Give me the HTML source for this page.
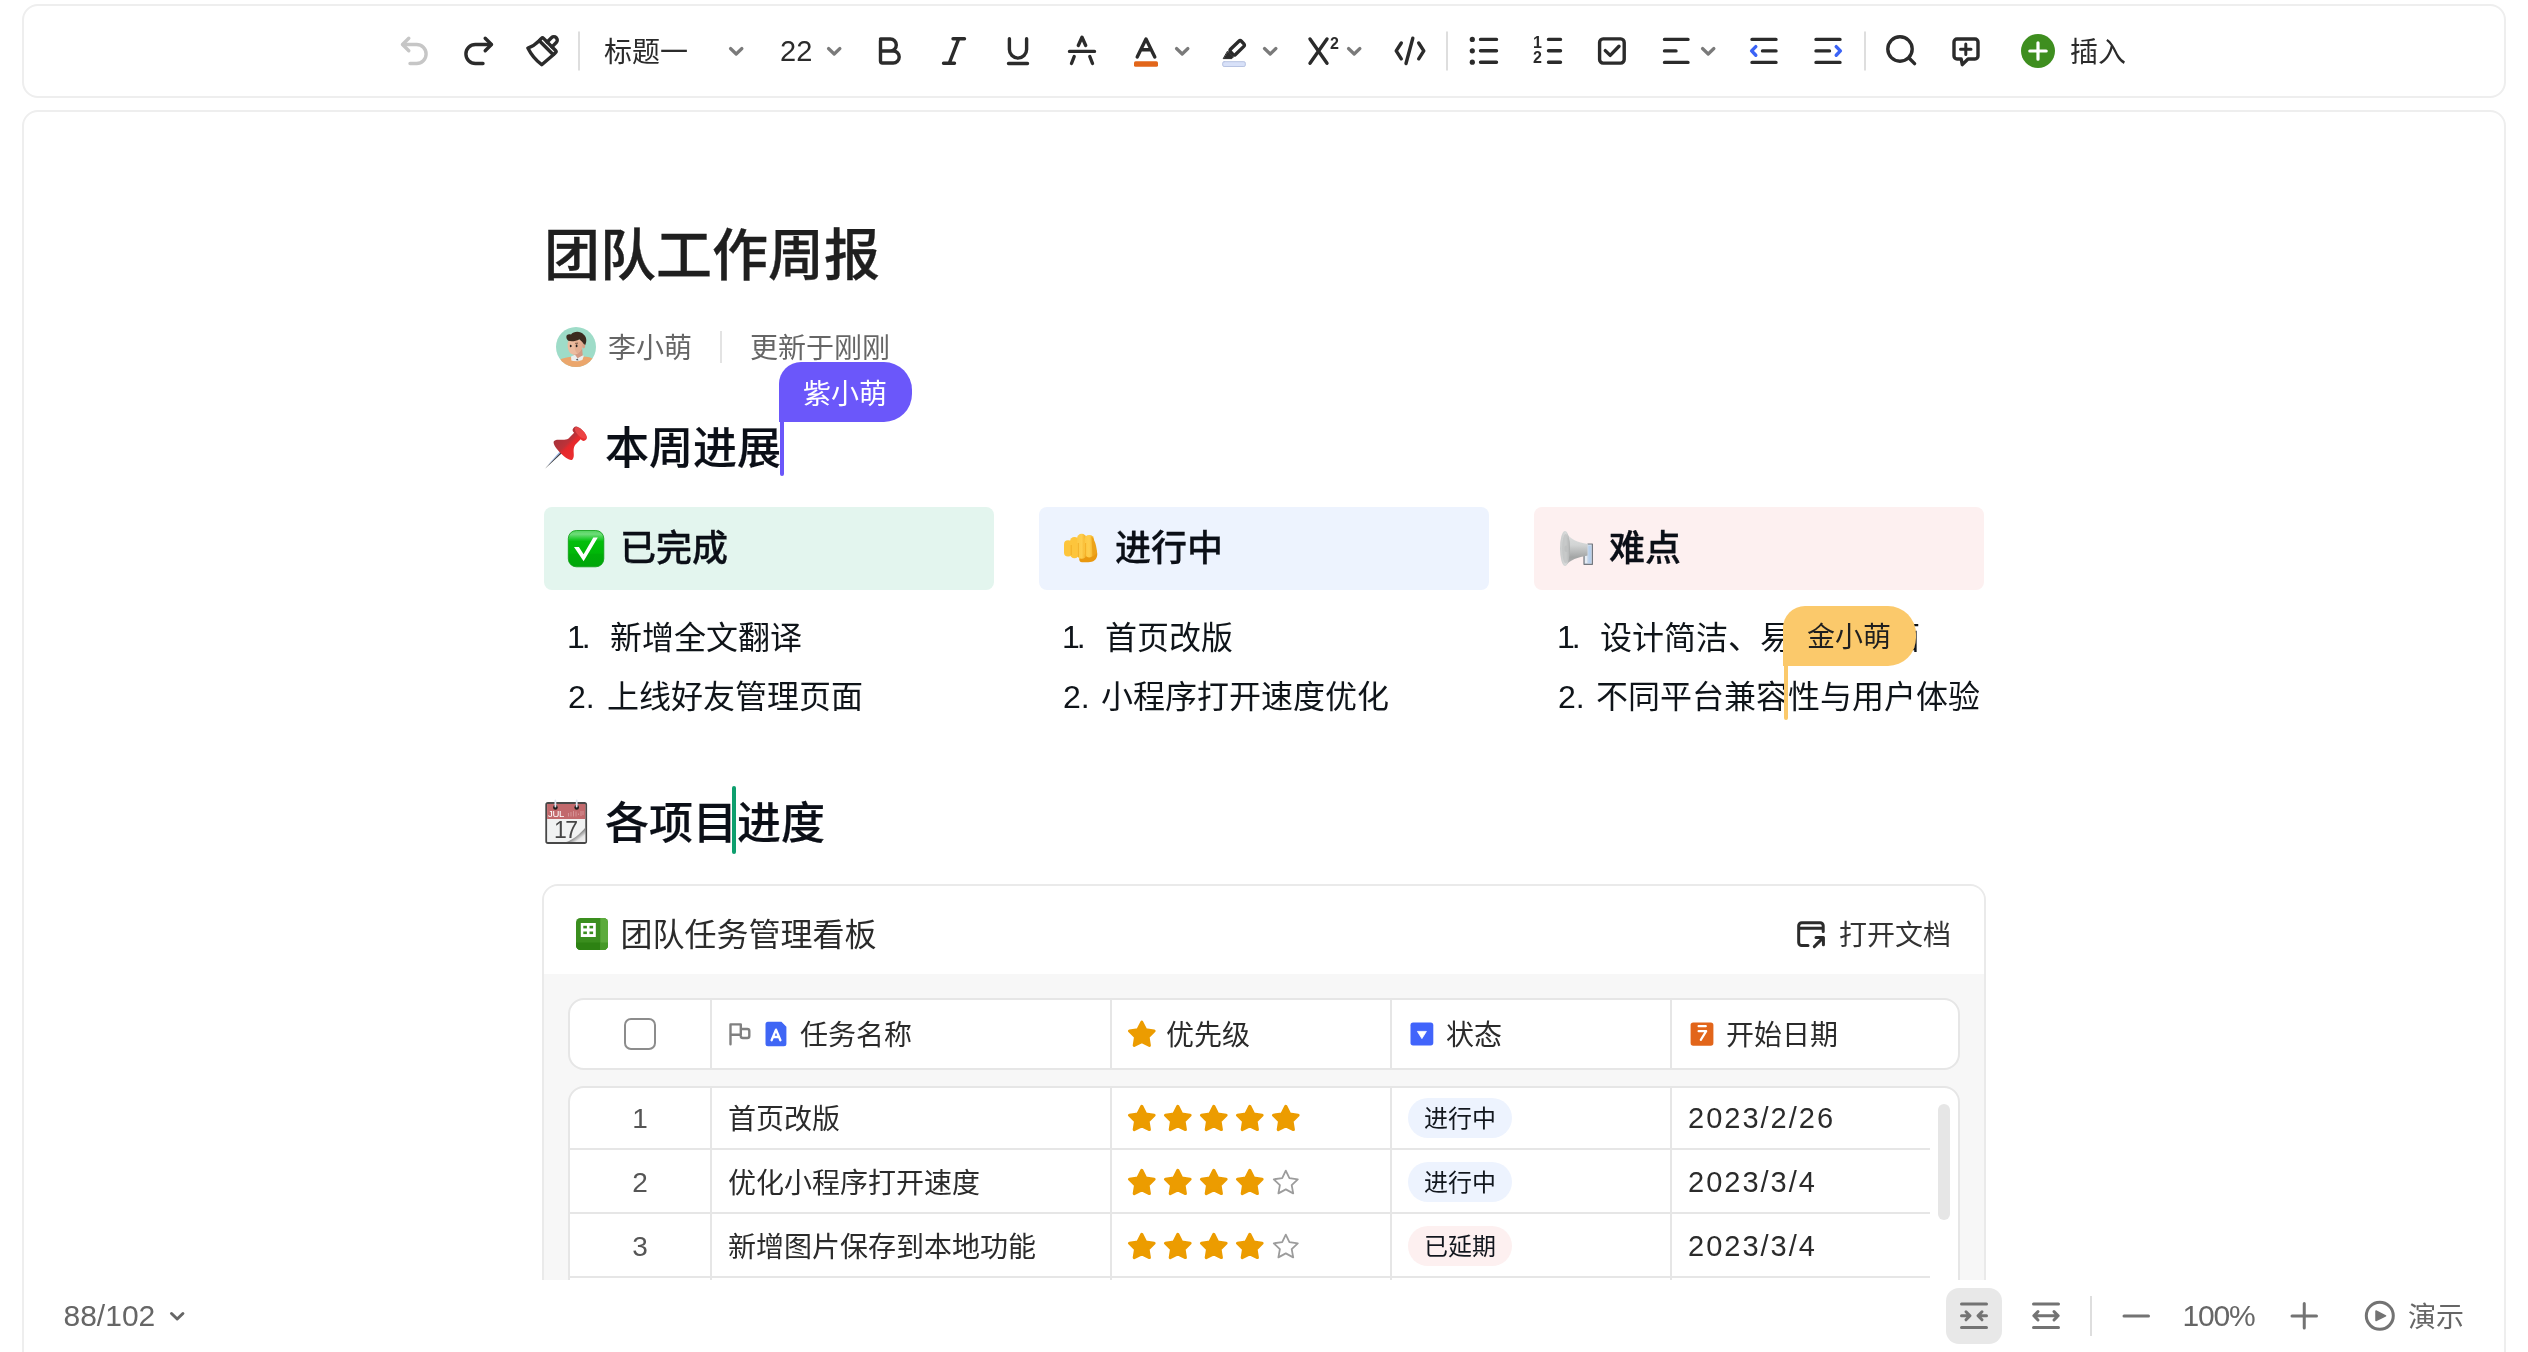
<!DOCTYPE html>
<html lang="zh-CN">
<head>
<meta charset="utf-8">
<title>团队工作周报</title>
<style>
*{box-sizing:border-box;margin:0;padding:0}
html,body{width:2528px;height:1352px;overflow:hidden;background:#fff}
body{position:relative;font-family:"Liberation Sans","Noto Sans CJK SC",sans-serif;color:#2b2b2b;-webkit-font-smoothing:antialiased}
#root{position:absolute;left:0;top:0;width:2528px;height:1352px;will-change:transform}
.abs{position:absolute}
.t{position:absolute;white-space:nowrap}
#toolbar{position:absolute;left:22px;top:4px;width:2484px;height:94px;border:2px solid #eeeeee;border-radius:16px;background:#fff}
#panel{position:absolute;left:22px;top:110px;width:2484px;height:1300px;border:2px solid #eeeeee;border-radius:16px;background:#fff}
#clip{position:absolute;left:0;top:0;width:2528px;height:1280px;overflow:hidden}
svg{position:absolute;left:0;top:0;overflow:visible}
.tb{font-size:28px;line-height:40px;top:33px;color:#2b2b2b}

.ttl{font-size:56px;line-height:80px;font-weight:500;color:#1f1f1f;-webkit-text-stroke:0.35px #1f1f1f}
.nomed .ttl{-webkit-text-stroke-width:1.3px}
.nomed .h2{-webkit-text-stroke-width:1px}
.nomed .h3{-webkit-text-stroke-width:0.85px}
.h2{font-size:44px;line-height:64px;font-weight:500;color:#0b0f17;-webkit-text-stroke:0.22px #0b0f17}
.card{top:507px;width:450px;height:83px;border-radius:8px}
.h3{font-size:36px;line-height:52px;top:523px;font-weight:500;color:#0b0f17;-webkit-text-stroke:0.3px #0b0f17}
.li{font-size:32px;line-height:60px;color:#0f1419}
.vl{top:1000px;width:2px;height:68px;background:#e6e6e6}
.vl2{top:1088px;width:2px;height:300px;background:#e6e6e6}
.hl{left:570px;width:1360px;height:2px;background:#e6e6e6}
.th{font-size:28px;line-height:40px;top:1016px;color:#2b2b2b}
.num{left:620px;width:40px;text-align:center;font-size:28px;line-height:40px;color:#555}
.td{font-size:28px;line-height:40px;color:#2b2b2b}
.pill{left:1408px;width:104px;height:40px;border-radius:20px;text-align:center;font-size:24px;line-height:41.5px;color:#12171e}
.date{left:1688px;font-size:29px;line-height:40px;color:#2b2b2b;letter-spacing:2px}
</style>
</head>
<body>
<div id="root">
<div id="toolbar"></div>
<div id="panel"></div>
<!--TOOLBAR-->
<svg width="2528" height="100" viewBox="0 0 2528 100" fill="none" stroke="#2b2b2b" stroke-width="3.4" stroke-linecap="round" stroke-linejoin="round">
<!-- undo -->
<g stroke="#c6c6c6"><path d="M408.8 38.2 L402.5 44.5 L408.8 50.8"/><path d="M403 44.5 H416.6 a9.5 9.5 0 0 1 0 19 H410"/></g>
<!-- redo -->
<path d="M485.2 38.2 L491.5 44.5 L485.2 50.8"/><path d="M491 44.5 H475.4 a9.5 9.5 0 0 0 0 19 H483"/>
<!-- format brush -->
<g transform="translate(547.8 46.2) rotate(45)"><path d="M-3.4 -2.5 V-8.6 a3.4 3.4 0 0 1 6.8 0 V-2.5"/><rect x="-10" y="-2.5" width="20" height="4.6" rx="1.5"/><path d="M-10 2.1 C-9.8 8.5 -10.8 11.5 -12.8 15.4 Q-2 19 8.8 17.4 L10 2.1"/></g>
<!-- separators -->
<g stroke="#dedede" stroke-width="2" stroke-linecap="butt"><path d="M579 31.5 V70.5"/><path d="M1447 31.5 V70.5"/><path d="M1865 31.5 V70.5"/></g>
<!-- chevrons -->
<g stroke="#7a7a7a" stroke-width="3.2"><path d="M730.5 48.5 l5.7 5.5 l5.7 -5.5"/><path d="M828.5 48.5 l5.7 5.5 l5.7 -5.5"/><path d="M1176.5 48.5 l5.7 5.5 l5.7 -5.5"/><path d="M1264.5 48.5 l5.7 5.5 l5.7 -5.5"/><path d="M1348.5 48.5 l5.7 5.5 l5.7 -5.5"/><path d="M1702.5 48.5 l5.7 5.5 l5.7 -5.5"/></g>
<!-- B -->
<path d="M880.5 39 H890.3 a6 6 0 0 1 0 12 H880.5 M880.5 51 H893.2 a6 6 0 0 1 0 12 H882.5 a2 2 0 0 1 -2 -2 V41 a2 2 0 0 1 2 -2"/>
<!-- I -->
<path d="M953 38.7 H964.5 M943.5 63.3 H954.5 M958.8 38.7 L949.2 63.3"/>
<!-- U -->
<path d="M1009.4 38.7 V49.5 a8.6 8.6 0 0 0 17.2 0 V38.7 M1008.5 63.5 H1027.5"/>
<!-- strike A -->
<path d="M1078.3 45.5 L1082 37.3 L1085.7 45.5 M1069.5 51.4 H1094.5 M1074.2 56.5 L1071.5 63.5 M1089.8 56.5 L1092.5 63.5"/>
<!-- text color A -->
<path d="M1137.2 57 L1146 39 L1154.8 57 M1141.2 49.8 H1150.8"/>
<rect x="1134" y="61.2" width="24" height="5.6" rx="1.6" fill="#e2661a" stroke="none"/>
<!-- highlighter -->
<g transform="translate(1237.2 47.8) rotate(46)"><rect x="-3.6" y="-7.6" width="7.2" height="15.2" rx="1.8"/></g><path d="M1223.6 58.6 L1231.8 58.6 L1233.4 57 L1227.8 51.4 Z" fill="#2b2b2b" stroke-width="1"/>
<rect x="1222.7" y="61.7" width="22.6" height="4.8" rx="1.4" fill="#d8e1f8" stroke="#b7c3e2" stroke-width="1"/>
<!-- X2 -->
<path d="M1310 39 L1327 63.3 M1327 39 L1310 63.3"/>
<!-- code -->
<path d="M1401.3 43 L1396.2 50.9 L1401.3 58.8 M1412.8 38.2 L1406 63.5 M1418.7 43 L1423.8 50.9 L1418.7 58.8"/>
<!-- bullets -->
<g fill="#2b2b2b" stroke="none"><circle cx="1472.3" cy="39.4" r="2.6"/><circle cx="1472.3" cy="50.8" r="2.6"/><circle cx="1472.3" cy="62.2" r="2.6"/></g>
<path d="M1480.5 39.4 H1496.5 M1480.5 50.8 H1496.5 M1480.5 62.2 H1496.5"/>
<!-- numbered -->
<path d="M1548.5 39.4 H1560.5 M1548.5 50.8 H1560.5 M1548.5 62.2 H1560.5"/>
<!-- checkbox -->
<rect x="1599.6" y="38.9" width="24.6" height="24.2" rx="3.5"/><path d="M1605.3 50.6 L1610.2 55.4 L1619 46.3"/>
<!-- align -->
<path d="M1664.5 39.4 H1688 M1664.5 50.9 H1676 M1664.5 62.4 H1688"/>
<!-- outdent -->
<path d="M1752 39.4 H1776 M1762.5 50.9 H1776 M1752 62.4 H1776"/><path d="M1755.8 46.6 L1751.6 50.9 L1755.8 55.2" stroke="#3b63f6"/>
<!-- indent -->
<path d="M1816 39.4 H1840 M1816 50.9 H1829.5 M1816 62.4 H1840"/><path d="M1836.2 46.6 L1840.4 50.9 L1836.2 55.2" stroke="#3b63f6"/>
<!-- search -->
<circle cx="1900" cy="49" r="12.2"/><path d="M1909 58 L1914.6 63.6"/>
<!-- comment -->
<path d="M1957 39 H1975 a3 3 0 0 1 3 3 V56 a3 3 0 0 1 -3 3 H1968 L1962.3 64.6 L1961.2 59 H1957 a3 3 0 0 1 -3 -3 V42 a3 3 0 0 1 3 -3 Z"/><path d="M1960.5 49.2 H1971 M1965.8 44 V54.5" stroke-width="3"/>
<!-- insert -->
<circle cx="2038" cy="51" r="17" fill="#3e8e1f" stroke="none"/><path d="M2029.8 51 H2046.2 M2038 42.8 V59.2" stroke="#fff" stroke-width="3.2"/>
</svg>
<div class="t tb" style="left:604px">标题一</div>
<div class="t tb" style="left:780px;font-size:29px;top:31px">22</div>
<div class="t" style="left:1330px;top:33.5px;font-size:16px;line-height:20px;font-weight:bold;color:#2b2b2b">2</div>
<div class="t" style="left:1533px;top:32.5px;font-size:16px;line-height:20px;font-weight:bold;color:#2b2b2b">1</div>
<div class="t" style="left:1533px;top:47.5px;font-size:16px;line-height:20px;font-weight:bold;color:#2b2b2b">2</div>
<div class="t tb" style="left:2070px;top:33px">插入</div>
<!--/TOOLBAR-->
<div id="clip">
<!--DOC-->
<!-- title -->
<div class="t ttl" style="left:544px;top:216px">团队工作周报</div>
<!-- avatar -->
<svg style="left:556px;top:327px" width="40" height="40" viewBox="0 0 40 40">
<defs><clipPath id="avc"><circle cx="20" cy="20" r="20"/></clipPath></defs>
<g clip-path="url(#avc)"><rect width="40" height="40" fill="#9edcc8"/>
<path d="M2 33.5 C7 30.8 12 29.9 17 29.8 L27 29.4 C31.5 29.6 35.5 30.6 38.5 32.2 L40 40 L0 40 Z" fill="#eba66c"/>
<path d="M18 23.5 L26.2 21.5 L26.8 29.2 L21.5 31.5 L17.6 28.4 Z" fill="#d39a83"/>
<path d="M15 29.6 L19 27.8 L21.6 31.2 L26.6 28.4 L27.9 28.8 L26.4 33 L22 34.2 L17.2 34 L15.3 33.4 Z" fill="#eceeee"/>
<path d="M19.8 33 L21.4 31.6 L22.6 33.4 Z" fill="#4c4f57"/>
<path d="M11.9 15 C11 20 12.4 24 14.4 26.3 C16.4 28.1 19.6 28 22 26.5 C25.6 24 27.1 20 27 15 C25 11 14 11 11.9 15 Z" fill="#ecbc9f"/>
<path d="M19 14 C18 20 19 26 22 26.5 C25.6 24 27.1 20 27 15 Z" fill="#dfa88c" opacity="0.7"/>
<ellipse cx="27.7" cy="18.8" rx="1.5" ry="2.6" fill="#d9a288"/>
<path d="M10.4 10.6 C9.9 7.4 12.5 6.7 15 7.4 C17.5 4.1 24.6 3.9 27.6 7.4 C30.9 10 30.9 14.6 29.2 17.9 L27.3 16.6 C26.5 14.5 24.5 13.8 23.4 12.2 C20 14.4 15 14.6 12.2 13.7 C11.2 13 10.6 12 10.4 10.6 Z" fill="#3b2b1f"/>
<ellipse cx="14.7" cy="19" rx="0.9" ry="1.3" fill="#22201f"/><ellipse cx="20.6" cy="18.9" rx="0.9" ry="1.3" fill="#22201f"/>
<path d="M19.2 16.4 L22 16.2" stroke="#4a3728" stroke-width="0.7"/>
</g></svg>
<div class="t" style="left:608px;top:329px;font-size:28px;line-height:40px;color:#666">李小萌</div>
<div class="abs" style="left:720px;top:331px;width:2px;height:32px;background:#e3e3e3"></div>
<div class="t" style="left:750px;top:329px;font-size:28px;line-height:40px;color:#666">更新于刚刚</div>
<!-- purple cursor -->
<div class="abs" style="left:779px;top:362px;width:133px;height:60px;background:#6b57fa;border-radius:22px 28px 28px 0"></div>
<div class="t" style="left:803px;top:374.5px;font-size:28px;line-height:40px;color:#fff">紫小萌</div>
<div class="abs" style="left:780px;top:415px;width:4px;height:61px;background:#6b57fa;border-radius:0 0 2px 2px"></div>
<!-- h2 1 -->
<div class="t h2" style="left:605px;top:417px">本周进展</div>
<!-- cards -->
<div class="abs card" style="left:544px;background:#e3f5ee"></div>
<div class="abs card" style="left:1039px;background:#edf3fe"></div>
<div class="abs card" style="left:1534px;background:#fdf0f0"></div>
<div class="t h3" style="left:620px">已完成</div>
<div class="t h3" style="left:1115px">进行中</div>
<div class="t h3" style="left:1609px">难点</div>
<!-- lists -->
<div class="t li" style="left:567px;top:607px;letter-spacing:-3px">1.</div><div class="t li" style="left:610px;top:607.5px">新增全文翻译</div>
<div class="t li" style="left:568px;top:666.5px">2.</div><div class="t li" style="left:607px;top:666.5px">上线好友管理页面</div>
<div class="t li" style="left:1062px;top:607px;letter-spacing:-3px">1.</div><div class="t li" style="left:1105px;top:607.5px">首页改版</div>
<div class="t li" style="left:1063px;top:666.5px">2.</div><div class="t li" style="left:1101px;top:666.5px">小程序打开速度优化</div>
<div class="t li" style="left:1557px;top:607px;letter-spacing:-3px">1.</div><div class="t li" style="left:1600px;top:607.5px">设计简洁、易用的界面</div>
<div class="t li" style="left:1558px;top:666.5px">2.</div><div class="t li" style="left:1596px;top:666.5px">不同平台兼容性与用户体验</div>
<!-- gold cursor -->
<div class="abs" style="left:1783px;top:606px;width:133px;height:60px;background:#fbc96b;border-radius:22px 28px 28px 0"></div>
<div class="t" style="left:1807px;top:618px;font-size:28px;line-height:40px;color:#1f1f1f">金小萌</div>
<div class="abs" style="left:1784px;top:660px;width:4px;height:60px;background:#fbc96b;border-radius:0 0 2px 2px"></div>
<!-- h2 2 -->
<div class="t h2" style="left:605px;top:792px">各项目进度</div>
<div class="abs" style="left:732px;top:786px;width:4px;height:68px;background:#0e9f6e;border-radius:2px"></div>
<!-- embed card -->
<div class="abs" style="left:542px;top:884px;width:1444px;height:500px;border:2px solid #eaeaea;border-radius:16px;background:#f7f7f7;overflow:hidden">
  <div class="abs" style="left:0;top:0;width:1440px;height:88px;background:#fff"></div>
</div>
<div class="t" style="left:620.5px;top:911px;font-size:32px;line-height:48px;color:#2b2b2b">团队任务管理看板</div>
<div class="t" style="left:1839px;top:915.5px;font-size:28px;line-height:40px;color:#333">打开文档</div>
<!-- header row -->
<div class="abs" style="left:568px;top:998px;width:1392px;height:72px;border:2px solid #e6e6e6;border-radius:16px;background:#fff"></div>
<div class="abs" style="left:568px;top:1086px;width:1392px;height:300px;border:2px solid #e6e6e6;border-radius:16px;background:#fff"></div>
<div class="abs vl" style="left:710px"></div><div class="abs vl" style="left:1110px"></div><div class="abs vl" style="left:1390px"></div><div class="abs vl" style="left:1670px"></div>
<div class="abs vl2" style="left:710px"></div><div class="abs vl2" style="left:1110px"></div><div class="abs vl2" style="left:1390px"></div><div class="abs vl2" style="left:1670px"></div>
<div class="abs hl" style="top:1148px"></div><div class="abs hl" style="top:1212px"></div><div class="abs hl" style="top:1276px"></div>
<div class="abs" style="left:1938px;top:1104px;width:12px;height:116px;border-radius:6px;background:#e6e6e6"></div>
<div class="abs" style="left:624px;top:1018px;width:32px;height:32px;border:2px solid #8c8c8c;border-radius:7px;background:#fff"></div>
<div class="t th" style="left:800px">任务名称</div>
<div class="t th" style="left:1166px">优先级</div>
<div class="t th" style="left:1446px">状态</div>
<div class="t th" style="left:1726px">开始日期</div>
<div class="t num" style="top:1098.5px">1</div><div class="t num" style="top:1162.5px">2</div><div class="t num" style="top:1226.5px">3</div>
<div class="t td" style="left:728px;top:1100px">首页改版</div>
<div class="t td" style="left:728px;top:1164px">优化小程序打开速度</div>
<div class="t td" style="left:728px;top:1228px">新增图片保存到本地功能</div>
<div class="abs pill" style="top:1098px;background:#edf3fe">进行中</div>
<div class="abs pill" style="top:1162px;background:#edf3fe">进行中</div>
<div class="abs pill" style="top:1226px;background:#fdf0f0">已延期</div>
<div class="t date" style="top:1098px">2023/2/26</div>
<div class="t date" style="top:1162px">2023/3/4</div>
<div class="t date" style="top:1226px">2023/3/4</div>
<svg width="2528" height="1352" viewBox="0 0 2528 1352" fill="none">
<defs><linearGradient id="gpin" x1="-13" y1="0" x2="13" y2="0" gradientUnits="userSpaceOnUse"><stop offset="0" stop-color="#a8323a"/><stop offset="0.42" stop-color="#bd3238"/><stop offset="0.55" stop-color="#e6282b"/><stop offset="1" stop-color="#ea2f30"/></linearGradient><linearGradient id="gchk" x1="0" y1="0" x2="0" y2="1"><stop offset="0" stop-color="#4fd35a"/><stop offset="0.1" stop-color="#6fdc7a"/><stop offset="0.24" stop-color="#1fca2c"/><stop offset="0.3" stop-color="#04be0c"/><stop offset="0.62" stop-color="#00b708"/><stop offset="0.66" stop-color="#00ad08"/><stop offset="1" stop-color="#00a60a"/></linearGradient><linearGradient id="ghorn" x1="0" y1="0" x2="0" y2="1"><stop offset="0" stop-color="#dfe1e1"/><stop offset="0.4" stop-color="#d2d4d4"/><stop offset="0.75" stop-color="#a3a5a5"/><stop offset="1" stop-color="#b4b6b6"/></linearGradient><linearGradient id="gmouth" x1="0" y1="0" x2="1" y2="0"><stop offset="0" stop-color="#c9cbcb"/><stop offset="0.6" stop-color="#d9dbdb"/><stop offset="1" stop-color="#a9abab"/></linearGradient><linearGradient id="gcurl" x1="0" y1="0" x2="1" y2="1"><stop offset="0" stop-color="#ffffff"/><stop offset="0.35" stop-color="#f4f4f4"/><stop offset="0.55" stop-color="#8a8a8a"/><stop offset="0.75" stop-color="#e8e8e8"/><stop offset="1" stop-color="#f2f2f2"/></linearGradient><linearGradient id="gfist" x1="0" y1="0" x2="1" y2="0"><stop offset="0" stop-color="#fdc843"/><stop offset="0.5" stop-color="#fece4e"/><stop offset="1" stop-color="#f3ad22"/></linearGradient></defs>
<g transform="translate(564 449.5) rotate(45)"><path d="M-1 2 L0.2 27.5 L1.2 2 Z" fill="#3c3c3c"/><path d="M-1.6 4 L-0.4 24 L-0.2 4 Z" fill="#9db8e8"/><path d="M-13 1 C-13 -3.5 -6 -5 -4.6 -11 L-4.6 -19 C-8 -19 -8.6 -20.5 -8.6 -23 C-8.6 -28 8.6 -28 8.6 -23 C8.6 -20.5 8 -19 4.6 -19 L4.6 -11 C6 -5 13 -3.5 13 1 C13 6.3 -13 6.3 -13 1 Z" fill="url(#gpin)"/><ellipse cx="0" cy="-23.4" rx="7.6" ry="3.2" fill="#ee4a4a" opacity="0.8"/></g>
<rect x="568.3" y="530.5" width="35.5" height="36.3" rx="8" fill="url(#gchk)" stroke="#0a9a10" stroke-width="0.8"/><path d="M574 547 L578.9 547 L583.6 554.2 L593.3 537.4 L597.8 537.4 L583.6 561.2 Z" fill="#fff"/>
<g><path d="M1079.5 546 C1090 543 1097.5 548 1097.3 554 C1097.2 560 1093 562.3 1088 562.2 L1082 562.2 C1078.5 562.2 1078.5 557 1081 556.5 Z" fill="#e9980f"/><rect x="1064" y="540.2" width="8.2" height="16.2" rx="4" fill="#fdc53c"/><rect x="1070" y="536.9" width="9" height="21.4" rx="4.4" fill="#fdc53c"/><rect x="1077" y="533.8" width="9.4" height="25" rx="4.6" fill="url(#gfist)"/><rect x="1084.4" y="535" width="9.6" height="22.4" rx="4.6" fill="url(#gfist)"/><path d="M1071.2 545 V555 M1078.3 543 V557 M1085.6 543 V557" stroke="#f0a920" stroke-width="1" opacity="0.8"/><path d="M1091.5 536.5 C1095 540 1096.6 546 1097 553 L1092.5 557 Z" fill="#eca21a"/></g>
<g><path d="M1584 553 V564.3 H1592.4 V544 H1587.5" fill="#cfdcec" stroke="#74787e" stroke-width="1.2" stroke-linejoin="round"/><rect x="1588.4" y="546" width="2.6" height="17" fill="#b7d0ec"/><rect x="1585" y="556" width="2" height="7" fill="#e6ecf2"/><path d="M1565 531 C1570 540 1578 542 1587.5 544 L1587.5 555.5 C1578 557 1570 560 1565 566 Z" fill="url(#ghorn)"/><ellipse cx="1565" cy="548.5" rx="5" ry="17.6" fill="url(#gmouth)"/><ellipse cx="1565.6" cy="548.6" rx="3.4" ry="14.6" fill="#b9bbbb" opacity="0.55"/><ellipse cx="1566.2" cy="548.8" rx="1.8" ry="3.2" fill="#bfc1c1"/></g>
<g><rect x="546.2" y="803" width="40" height="40" rx="1.8" fill="#f1f2f2" stroke="#484848" stroke-width="1.8"/><path d="M547.1 803.9 H585.3 V819 H547.1 Z" fill="#c2696c"/><path d="M566 842.1 C573 840 580 834 585.3 827.5 L585.3 842.1 Z" fill="url(#gcurl)"/><circle cx="555.4" cy="807.4" r="2.3" fill="#1c1c1c"/><circle cx="576.7" cy="807.4" r="2.3" fill="#1c1c1c"/><path d="M555.4 800.5 V806.5 M576.7 800.5 V806.5" stroke="#dfe6f2" stroke-width="1.8" stroke-linecap="round"/><path d="M568.5 813 V816.5 M571 812 V816.5 M573.5 811 V816.5 M576 811.5 V816.5 M578.5 813.5 V815 M581 811 V816 M583 811 V815" stroke="#d9a0a2" stroke-width="0.8"/></g>
<g><rect x="576" y="918" width="32" height="32" rx="4.5" fill="#3a8e1e"/><path d="M600.3 918 H603.5 a4.5 4.5 0 0 1 4.5 4.5 V945.5 a4.5 4.5 0 0 1 -4.5 4.5 H600.3 Z" fill="#5cab3c"/><path d="M576 942.6 H600.3 V950 H580.5 a4.5 4.5 0 0 1 -4.5 -4.5 Z" fill="#2d8213"/><path d="M600.3 942.6 H608 V945.5 a4.5 4.5 0 0 1 -4.5 4.5 H600.3 Z" fill="#469a28"/><rect x="580.8" y="923" width="15" height="14" fill="#fff"/><g fill="#3a8e1e"><rect x="583.3" y="925.8" width="3.6" height="2.6"/><rect x="589.5" y="925.8" width="3.6" height="2.6"/><rect x="583.3" y="931.5" width="3.6" height="2.6"/><rect x="589.5" y="931.5" width="3.6" height="2.6"/></g></g>
<g stroke="#2b2b2b" stroke-width="3" stroke-linecap="round" stroke-linejoin="round"><path d="M1808 945.5 H1801.7 a3 3 0 0 1 -3 -3 V925.8 a3 3 0 0 1 3 -3 H1820.2 a3 3 0 0 1 3 3 V931.5 M1798.7 928.2 H1823.2"/><path d="M1814.3 946.6 L1823 937.9 M1816 937.4 H1823.4 V944.8"/></g>
<path d="M730.5 1044.2 V1024.4 H740.8 V1034.8 H731 M740.8 1029 H747.3 a2 2 0 0 1 2 2 V1036 a2 2 0 0 1 -2 2 H742.8 a2 2 0 0 1 -2 -2" stroke="#808080" stroke-width="2.4" stroke-linecap="round" stroke-linejoin="round"/>
<path d="M768 1021.8 H781.4 L786.4 1026.8 V1043.8 a2.5 2.5 0 0 1 -2.5 2.5 H768 a2.5 2.5 0 0 1 -2.5 -2.5 V1024.3 a2.5 2.5 0 0 1 2.5 -2.5 Z" fill="#3f66f5"/>
<path d="M771.6 1040.2 L776 1029.6 L780.4 1040.2 M773.3 1037 H778.7" stroke="#fff" stroke-width="2.3" stroke-linecap="round" stroke-linejoin="round"/>
<rect x="1410.5" y="1022.6" width="22.8" height="22.8" rx="2.6" fill="#4164fb"/><path d="M1417.4 1031.4 H1426.4 L1421.9 1038.6 Z" fill="#fff" stroke="#fff" stroke-width="0.8" stroke-linejoin="round"/>
<rect x="1690.6" y="1022.5" width="22.8" height="23.2" rx="2.6" fill="#e2651a"/><path d="M1698.6 1026.2 H1705.8 M1698.6 1031.2 H1706.2 L1700.8 1039.8" stroke="#fff" stroke-width="2.2" stroke-linecap="round" stroke-linejoin="round"/>
<path d="M1141.8 1022.1 L1145.7 1029.7 L1154.1 1031.0 L1148.1 1037.0 L1149.4 1045.4 L1141.8 1041.6 L1134.2 1045.4 L1135.5 1037.0 L1129.5 1031.0 L1137.9 1029.7 Z M1141.8 1106.3 L1145.7 1113.9 L1154.1 1115.2 L1148.1 1121.2 L1149.4 1129.6 L1141.8 1125.8 L1134.2 1129.6 L1135.5 1121.2 L1129.5 1115.2 L1137.9 1113.9 Z M1177.8 1106.3 L1181.7 1113.9 L1190.1 1115.2 L1184.1 1121.2 L1185.4 1129.6 L1177.8 1125.8 L1170.2 1129.6 L1171.5 1121.2 L1165.5 1115.2 L1173.9 1113.9 Z M1213.8 1106.3 L1217.7 1113.9 L1226.1 1115.2 L1220.1 1121.2 L1221.4 1129.6 L1213.8 1125.8 L1206.2 1129.6 L1207.5 1121.2 L1201.5 1115.2 L1209.9 1113.9 Z M1249.8 1106.3 L1253.7 1113.9 L1262.1 1115.2 L1256.1 1121.2 L1257.4 1129.6 L1249.8 1125.8 L1242.2 1129.6 L1243.5 1121.2 L1237.5 1115.2 L1245.9 1113.9 Z M1285.8 1106.3 L1289.7 1113.9 L1298.1 1115.2 L1292.1 1121.2 L1293.4 1129.6 L1285.8 1125.8 L1278.2 1129.6 L1279.5 1121.2 L1273.5 1115.2 L1281.9 1113.9 Z M1141.8 1170.3 L1145.7 1177.9 L1154.1 1179.2 L1148.1 1185.2 L1149.4 1193.6 L1141.8 1189.8 L1134.2 1193.6 L1135.5 1185.2 L1129.5 1179.2 L1137.9 1177.9 Z M1177.8 1170.3 L1181.7 1177.9 L1190.1 1179.2 L1184.1 1185.2 L1185.4 1193.6 L1177.8 1189.8 L1170.2 1193.6 L1171.5 1185.2 L1165.5 1179.2 L1173.9 1177.9 Z M1213.8 1170.3 L1217.7 1177.9 L1226.1 1179.2 L1220.1 1185.2 L1221.4 1193.6 L1213.8 1189.8 L1206.2 1193.6 L1207.5 1185.2 L1201.5 1179.2 L1209.9 1177.9 Z M1249.8 1170.3 L1253.7 1177.9 L1262.1 1179.2 L1256.1 1185.2 L1257.4 1193.6 L1249.8 1189.8 L1242.2 1193.6 L1243.5 1185.2 L1237.5 1179.2 L1245.9 1177.9 Z M1141.8 1234.3 L1145.7 1241.9 L1154.1 1243.2 L1148.1 1249.2 L1149.4 1257.6 L1141.8 1253.8 L1134.2 1257.6 L1135.5 1249.2 L1129.5 1243.2 L1137.9 1241.9 Z M1177.8 1234.3 L1181.7 1241.9 L1190.1 1243.2 L1184.1 1249.2 L1185.4 1257.6 L1177.8 1253.8 L1170.2 1257.6 L1171.5 1249.2 L1165.5 1243.2 L1173.9 1241.9 Z M1213.8 1234.3 L1217.7 1241.9 L1226.1 1243.2 L1220.1 1249.2 L1221.4 1257.6 L1213.8 1253.8 L1206.2 1257.6 L1207.5 1249.2 L1201.5 1243.2 L1209.9 1241.9 Z M1249.8 1234.3 L1253.7 1241.9 L1262.1 1243.2 L1256.1 1249.2 L1257.4 1257.6 L1249.8 1253.8 L1242.2 1257.6 L1243.5 1249.2 L1237.5 1243.2 L1245.9 1241.9 Z" fill="#ec9c00" stroke="#ec9c00" stroke-width="3" stroke-linejoin="round"/>
<path d="M1285.8 1170.6 L1289.4 1178.2 L1297.8 1179.3 L1291.7 1185.1 L1293.2 1193.4 L1285.8 1189.4 L1278.4 1193.4 L1279.9 1185.1 L1273.8 1179.3 L1282.2 1178.2 Z M1285.8 1234.6 L1289.4 1242.2 L1297.8 1243.3 L1291.7 1249.1 L1293.2 1257.4 L1285.8 1253.4 L1278.4 1257.4 L1279.9 1249.1 L1273.8 1243.3 L1282.2 1242.2 Z" fill="none" stroke="#9c9c9c" stroke-width="1.8" stroke-linejoin="round"/>
</svg>
<div class="t" style="left:548px;top:807.5px;font-size:9.5px;line-height:12px;color:#fff;letter-spacing:-0.3px">JUL</div>
<div class="t" style="left:554px;top:817px;font-size:23px;line-height:26px;color:#454545;letter-spacing:-1.5px">17</div>
<!--/DOC-->
</div>
<!--BOTTOM-->
<div class="t" style="left:63.5px;top:1296px;font-size:30px;line-height:40px;color:#666">88/102</div>
<div class="abs" style="left:1946px;top:1288px;width:56px;height:56px;border-radius:13px;background:#e8e8e8"></div>
<div class="abs" style="left:2090px;top:1296px;width:2px;height:40px;background:#dedede"></div>
<div class="t" style="left:2182.5px;top:1295.5px;font-size:30px;line-height:40px;color:#666;letter-spacing:-1.2px">100%</div>
<div class="t" style="left:2408px;top:1297.5px;font-size:28px;line-height:40px;color:#666">演示</div>
<svg width="2528" height="1352" viewBox="0 0 2528 1352" fill="none" stroke="#737373" stroke-width="3" stroke-linecap="round" stroke-linejoin="round">
<path d="M171.5 1313.5 l5.7 5.5 l5.7 -5.5" stroke="#666"/>
<path d="M1961.5 1304 H1986.5 M1961.5 1327.5 H1986.5 M1961.5 1315.8 H1969.5 M1966 1311.8 L1970 1315.8 L1966 1319.8 M1986.5 1315.8 H1978.5 M1982 1311.8 L1978 1315.8 L1982 1319.8"/>
<path d="M2033.5 1304 H2058.5 M2033.5 1327.5 H2058.5 M2034 1315.8 H2058 M2038 1311.6 L2033.8 1315.8 L2038 1320 M2054 1311.6 L2058.2 1315.8 L2054 1320"/>
<path d="M2124 1316 H2148.5"/>
<path d="M2292 1316 H2316.5 M2304.25 1303.5 V1328"/>
<circle cx="2379.8" cy="1315.8" r="13.5"/><path d="M2376 1311 V1320.6 L2385.6 1315.8 Z" fill="#737373" stroke-width="1.5"/>
</svg>
<!--/BOTTOM-->
</div>
<script>
(function(){try{var c=document.createElement('canvas');c.width=80;c.height=80;var x=c.getContext('2d');
function m(w){x.clearRect(0,0,80,80);x.font=w+' 60px "Noto Sans CJK SC"';x.fillText('\u56e2',5,62);var d=x.getImageData(0,0,80,80).data,s=0;for(var i=3;i<d.length;i+=4)s+=d[i];return s;}
var a=m(400),b=m(500);if(a>0&&Math.abs(a-b)<a*0.03){document.documentElement.className='nomed';}}catch(e){}})();
</script>
</body>
</html>
